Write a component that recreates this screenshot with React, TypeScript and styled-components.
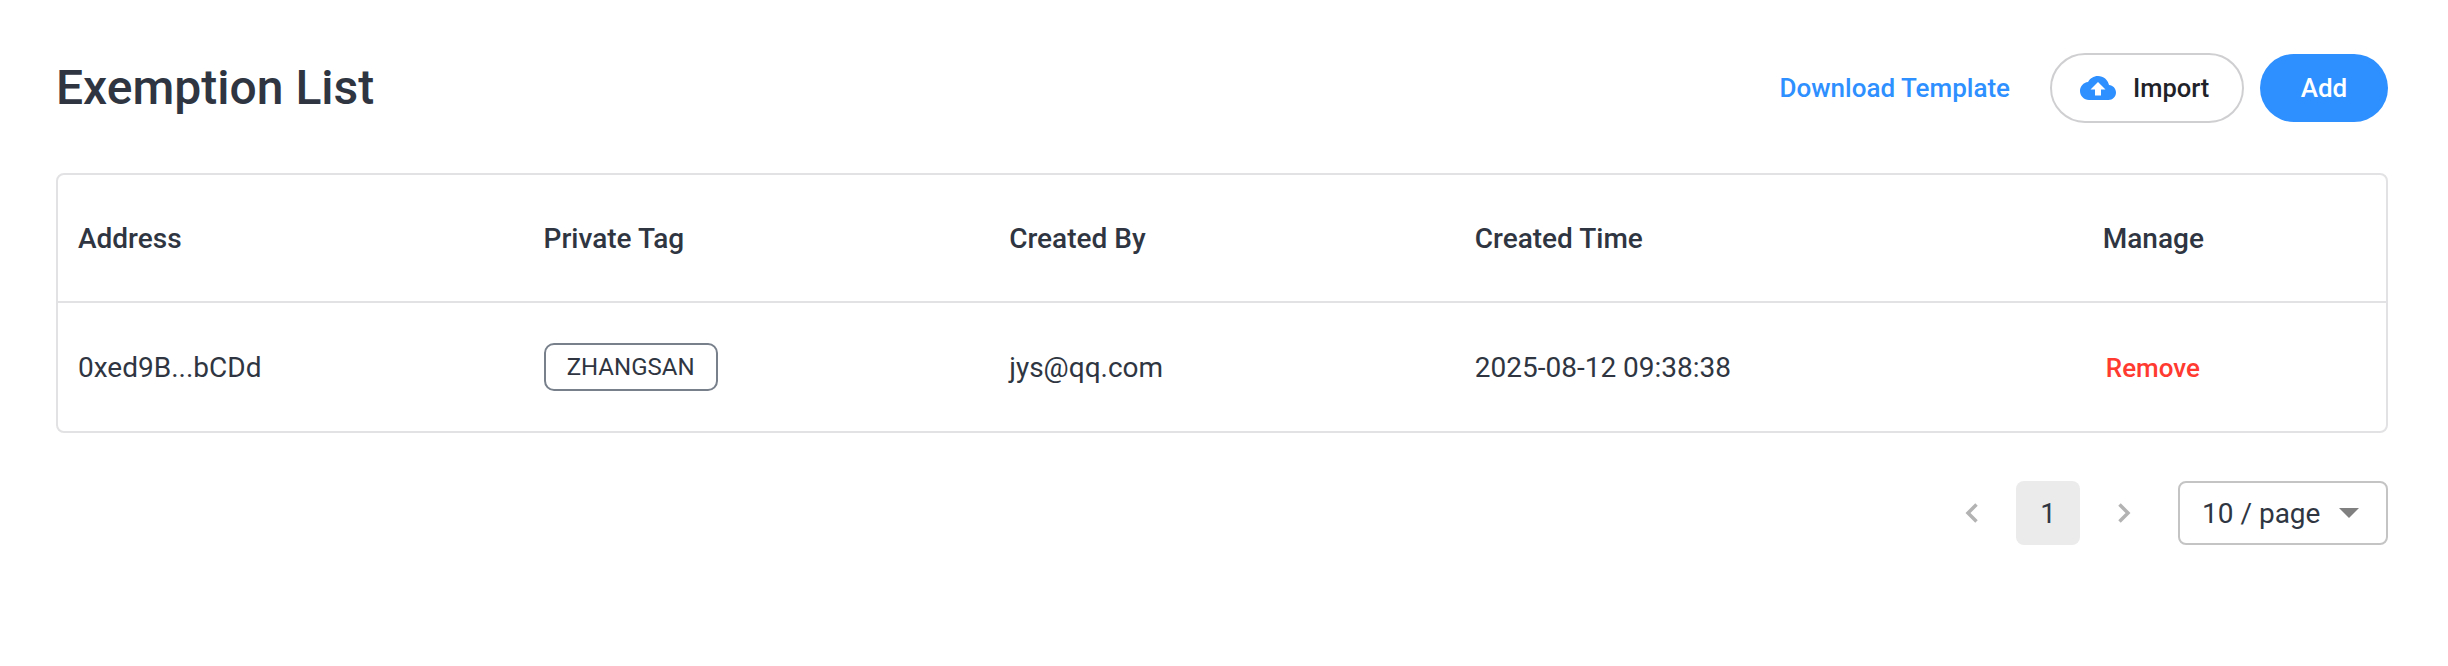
import React from 'react';
import styled, { createGlobalStyle } from 'styled-components';

const GlobalStyle = createGlobalStyle`
	body {
		margin: 0;
		background: #fff;
		font-family: Roboto, "Liberation Sans", sans-serif;
		color: #2f3642;
	}
`;

const Page = styled.div`
	padding: 54px 60px 0 56px;
`;

const Header = styled.header`
	display: flex;
	align-items: center;
	justify-content: space-between;
	height: 68px;
	margin-bottom: 51px;
`;

const Title = styled.h1`
	margin: 0;
	font-size: 48px;
	line-height: 68px;
	font-weight: 500;
	color: #2f3642;
`;

const Actions = styled.div`
	display: flex;
	align-items: center;
`;

const TemplateLink = styled.a`
	font-size: 26px;
	font-weight: 500;
	color: #2e8fff;
	margin-right: 40px;
`;

const ImportButton = styled.button`
	display: flex;
	align-items: center;
	gap: 17px;
	width: 194px;
	height: 70px;
	padding: 0 0 0 28px;
	border: 2px solid #cfcfd2;
	border-radius: 35px;
	background: #fff;
	font-family: inherit;
	font-size: 25.5px;
	font-weight: 500;
	color: #1f2329;
	margin-right: 16px;
`;

const AddButton = styled.button`
	width: 128px;
	height: 68px;
	padding: 0;
	border: 0;
	border-radius: 34px;
	background: #2e8fff;
	font-family: inherit;
	font-size: 26px;
	font-weight: 500;
	color: #fff;
`;

const TableCard = styled.div`
	border: 2px solid #e2e2e4;
	border-radius: 8px;
`;

const Row = styled.div<{ $head?: boolean }>`
	display: grid;
	grid-template-columns: 465.6px 465.6px 465.6px 628px 1fr;
	align-items: center;
	height: ${p => (p.$head ? '126px' : '128px')};
	padding-left: 20px;
	font-size: 28px;
	font-weight: ${p => (p.$head ? 500 : 400)};
	border-bottom: ${p => (p.$head ? '2px solid #e2e2e4' : '0')};
`;

const Tag = styled.span`
	display: flex;
	align-items: center;
	justify-content: center;
	width: 174px;
	height: 48px;
	box-sizing: border-box;
	border: 2px solid #78808c;
	border-radius: 10px;
	font-size: 24px;
`;

const RemoveLink = styled.a`
	font-size: 26px;
	font-weight: 500;
	color: #ff3a30;
	margin-left: 3px;
`;

const Pager = styled.div`
	display: flex;
	align-items: center;
	justify-content: flex-end;
	margin-top: 48px;
`;

const PageArrow = styled.span`
	display: flex;
	align-items: center;
	justify-content: center;
	width: 64px;
	height: 64px;
	margin: 0 12px;
`;

const PageNumber = styled.span`
	display: flex;
	align-items: center;
	justify-content: center;
	width: 64px;
	height: 64px;
	border-radius: 8px;
	background: #ebebeb;
	font-size: 28px;
`;

const PageSize = styled.div`
	display: flex;
	align-items: center;
	justify-content: space-between;
	box-sizing: border-box;
	width: 210px;
	height: 64px;
	margin-left: 10px;
	padding: 0 27px 0 22px;
	border: 2px solid #c4c4c4;
	border-radius: 8px;
	font-size: 28px;
`;

const Caret = styled.span`
	width: 0;
	height: 0;
	border-left: 10px solid transparent;
	border-right: 10px solid transparent;
	border-top: 10px solid #808080;
`;

const CloudIcon = () => (
	<svg width="36" height="24" viewBox="0 4 24 16">
		<path
			fill="#2e8fff"
			d="M19.35 10.04C18.67 6.59 15.64 4 12 4 9.11 4 6.6 5.64 5.35 8.04 2.34 8.36 0 10.91 0 14c0 3.31 2.69 6 6 6h13c2.76 0 5-2.24 5-5 0-2.64-2.05-4.78-4.65-4.96zM14 13v4h-4v-4H7l5-5 5 5h-3z"
		/>
	</svg>
);

const Chevron = ({ left }: { left?: boolean }) => (
	<svg width="14" height="20" viewBox="0 0 14 20" fill="none">
		<path
			d={left ? 'M11.500 1.500L3 10l8.500 8.500' : 'M2.500 1.500L11 10l-8.500 8.500'}
			stroke="#b3b3b3"
			strokeWidth="3.500"
		/>
	</svg>
);

const columns = ['Address', 'Private Tag', 'Created By', 'Created Time', 'Manage'];

export default function App() {
	return (
		<Page>
			<GlobalStyle />
			<Header>
				<Title>Exemption List</Title>
				<Actions>
					<TemplateLink>Download Template</TemplateLink>
					<ImportButton>
						<CloudIcon />
						Import
					</ImportButton>
					<AddButton>Add</AddButton>
				</Actions>
			</Header>
			<TableCard>
				<Row $head>
					{columns.map(name => (
						<div key={name}>{name}</div>
					))}
				</Row>
				<Row>
					<div>0xed9B...bCDd</div>
					<div>
						<Tag>ZHANGSAN</Tag>
					</div>
					<div>jys@qq.com</div>
					<div>2025-08-12 09:38:38</div>
					<div>
						<RemoveLink>Remove</RemoveLink>
					</div>
				</Row>
			</TableCard>
			<Pager>
				<PageArrow>
					<Chevron left />
				</PageArrow>
				<PageNumber>1</PageNumber>
				<PageArrow>
					<Chevron />
				</PageArrow>
				<PageSize>
					10 / page
					<Caret />
				</PageSize>
			</Pager>
		</Page>
	);
}
